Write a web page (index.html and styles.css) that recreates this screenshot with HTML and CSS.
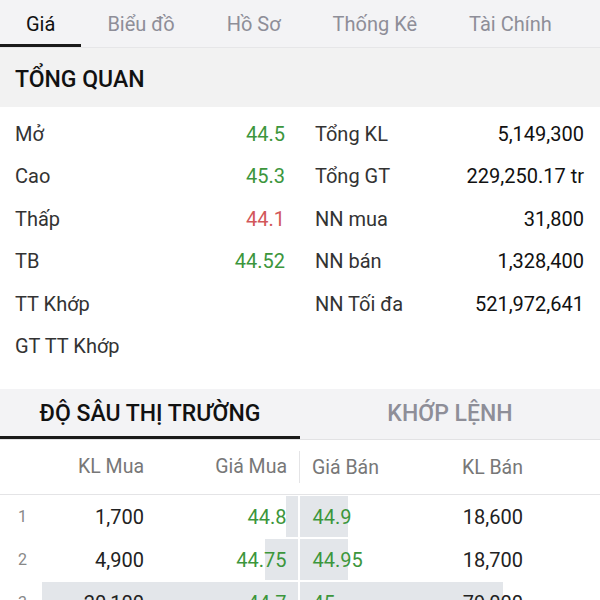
FILE: index.html
```html
<!DOCTYPE html>
<html lang="vi">
<head>
    <meta charset="UTF-8">
    <meta name="viewport" content="width=device-width, initial-scale=1.0">
    <title>Giá</title>
    <link rel="stylesheet" href="styles.css">
</head>
<body>
    <nav class="tabs">
        <div class="tab active">Giá</div>
        <div class="tab">Biểu đồ</div>
        <div class="tab">Hồ Sơ</div>
        <div class="tab">Thống Kê</div>
        <div class="tab">Tài Chính</div>
    </nav>

    <h2 class="section-title">TỔNG QUAN</h2>

    <div class="overview">
        <div class="col">
            <div class="row"><span>Mở</span><span class="up">44.5</span></div>
            <div class="row"><span>Cao</span><span class="up">45.3</span></div>
            <div class="row"><span>Thấp</span><span class="down">44.1</span></div>
            <div class="row"><span>TB</span><span class="up">44.52</span></div>
            <div class="row"><span>TT Khớp</span><span></span></div>
            <div class="row"><span>GT TT Khớp</span><span></span></div>
        </div>
        <div class="col right">
            <div class="row"><span>Tổng KL</span><span>5,149,300</span></div>
            <div class="row"><span>Tổng GT</span><span>229,250.17 tr</span></div>
            <div class="row"><span>NN mua</span><span>31,800</span></div>
            <div class="row"><span>NN bán</span><span>1,328,400</span></div>
            <div class="row"><span>NN Tối đa</span><span>521,972,641</span></div>
        </div>
    </div>

    <nav class="depth-tabs">
        <div class="dtab active">ĐỘ SÂU THỊ TRƯỜNG</div>
        <div class="dtab">KHỚP LỆNH</div>
    </nav>

    <div class="depth">
        <div class="depth-head">
            <div class="half buy-half">
                <span></span><span class="num">KL Mua</span><span class="num">Giá Mua</span>
            </div>
            <div class="half sell-half">
                <span>Giá Bán</span><span class="num">KL Bán</span>
            </div>
        </div>

        <div class="depth-row">
            <div class="half buy-half bar" style="--w: 12px">
                <span class="idx">1</span><span class="num">1,700</span><span class="num up">44.8</span>
            </div>
            <div class="half sell-half bar-sell" style="--w: 48px">
                <span class="up">44.9</span><span class="num">18,600</span>
            </div>
        </div>
        <div class="depth-row">
            <div class="half buy-half bar" style="--w: 33px">
                <span class="idx">2</span><span class="num">4,900</span><span class="num up">44.75</span>
            </div>
            <div class="half sell-half bar-sell" style="--w: 48px">
                <span class="up">44.95</span><span class="num">18,700</span>
            </div>
        </div>
        <div class="depth-row">
            <div class="half buy-half bar" style="--w: 256px">
                <span class="idx">3</span><span class="num">20,100</span><span class="num up">44.7</span>
            </div>
            <div class="half sell-half bar-sell" style="--w: 203px">
                <span class="up">45</span><span class="num">79,000</span>
            </div>
        </div>
    </div>
</body>
</html>
```

FILE: styles.css
```css
body {
    margin: 0;
    font-family: Roboto, "Noto Sans", sans-serif;
    color: #222;
    background-color: #fff;
    width: 600px;
    height: 600px;
    overflow: hidden;
}
.tabs {
    display: flex;
    height: 48px;
    background-color: #f3f3f5;
    border-bottom: 1px solid #e6e6e8;
    box-sizing: border-box;
}
.tab {
    padding: 0 26px;
    font-size: 20px;
    line-height: 49px;
    height: 44px;
    color: #8e8e98;
    border-bottom: 3px solid transparent;
}
.tab.active {
    color: #111;
    border-bottom-color: #1a1a1a;
}
.section-title {
    margin: 0;
    height: 59px;
    line-height: 63px;
    padding-left: 15px;
    font-size: 23px;
    font-weight: 500;
    color: #111;
    background-color: #f2f2f2;
}
.overview {
    display: flex;
    padding-top: 6px;
    height: 276px;
}
.col {
    width: 300px;
    box-sizing: border-box;
    padding: 0 15px;
}
.col.right {
    padding: 0 16px 0 15px;
}
.row {
    display: flex;
    justify-content: space-between;
    height: 42.4px;
    line-height: 42px;
    font-size: 20px;
    color: #333;
}
.right .row span:last-child {
    color: #111;
}
.up {
    color: #3c963c;
}
.down {
    color: #d2575a;
}
.depth-tabs {
    display: flex;
    height: 51px;
    background-color: #f3f3f5;
    border-bottom: 1px solid #e2e2e4;
    box-sizing: border-box;
}
.dtab {
    flex: 1;
    text-align: center;
    font-size: 23px;
    font-weight: 500;
    line-height: 50px;
    color: #8e8e98;
    border-bottom: 3px solid transparent;
}
.dtab.active {
    color: #111;
    border-bottom-color: #1a1a1a;
}
.depth {
    font-size: 20px;
}
.depth-head {
    display: flex;
    height: 54px;
    align-items: center;
    border-bottom: 1px solid #e4e4e6;
    color: #777;
    font-size: 19.5px;
}
.depth-head .buy-half {
    border-right: 1px solid #e4e4e6;
    height: 32px;
    line-height: 32px;
}
.half {
    display: grid;
    align-items: center;
    box-sizing: border-box;
}
.buy-half {
    width: 300px;
    grid-template-columns: 40px 104px 1fr;
    padding-right: 12px;
}
.sell-half {
    width: 300px;
    grid-template-columns: 1fr 1fr;
    padding: 0 77px 0 12px;
}
.num {
    text-align: right;
}
.depth-row {
    display: flex;
    height: 43px;
    padding-top: 1px;
    box-sizing: border-box;
    color: #222;
}
.depth-row .half {
    height: 41px;
}
.depth-row .buy-half {
    margin-right: 2px;
    width: 299px;
}
.bar {
    background: linear-gradient(to left, #e3e6ea var(--w), transparent var(--w));
}
.bar-sell {
    background: linear-gradient(to right, #e3e6ea var(--w), transparent var(--w));
}
.idx {
    padding-left: 18px;
    font-size: 16px;
    color: #888;
}
```
